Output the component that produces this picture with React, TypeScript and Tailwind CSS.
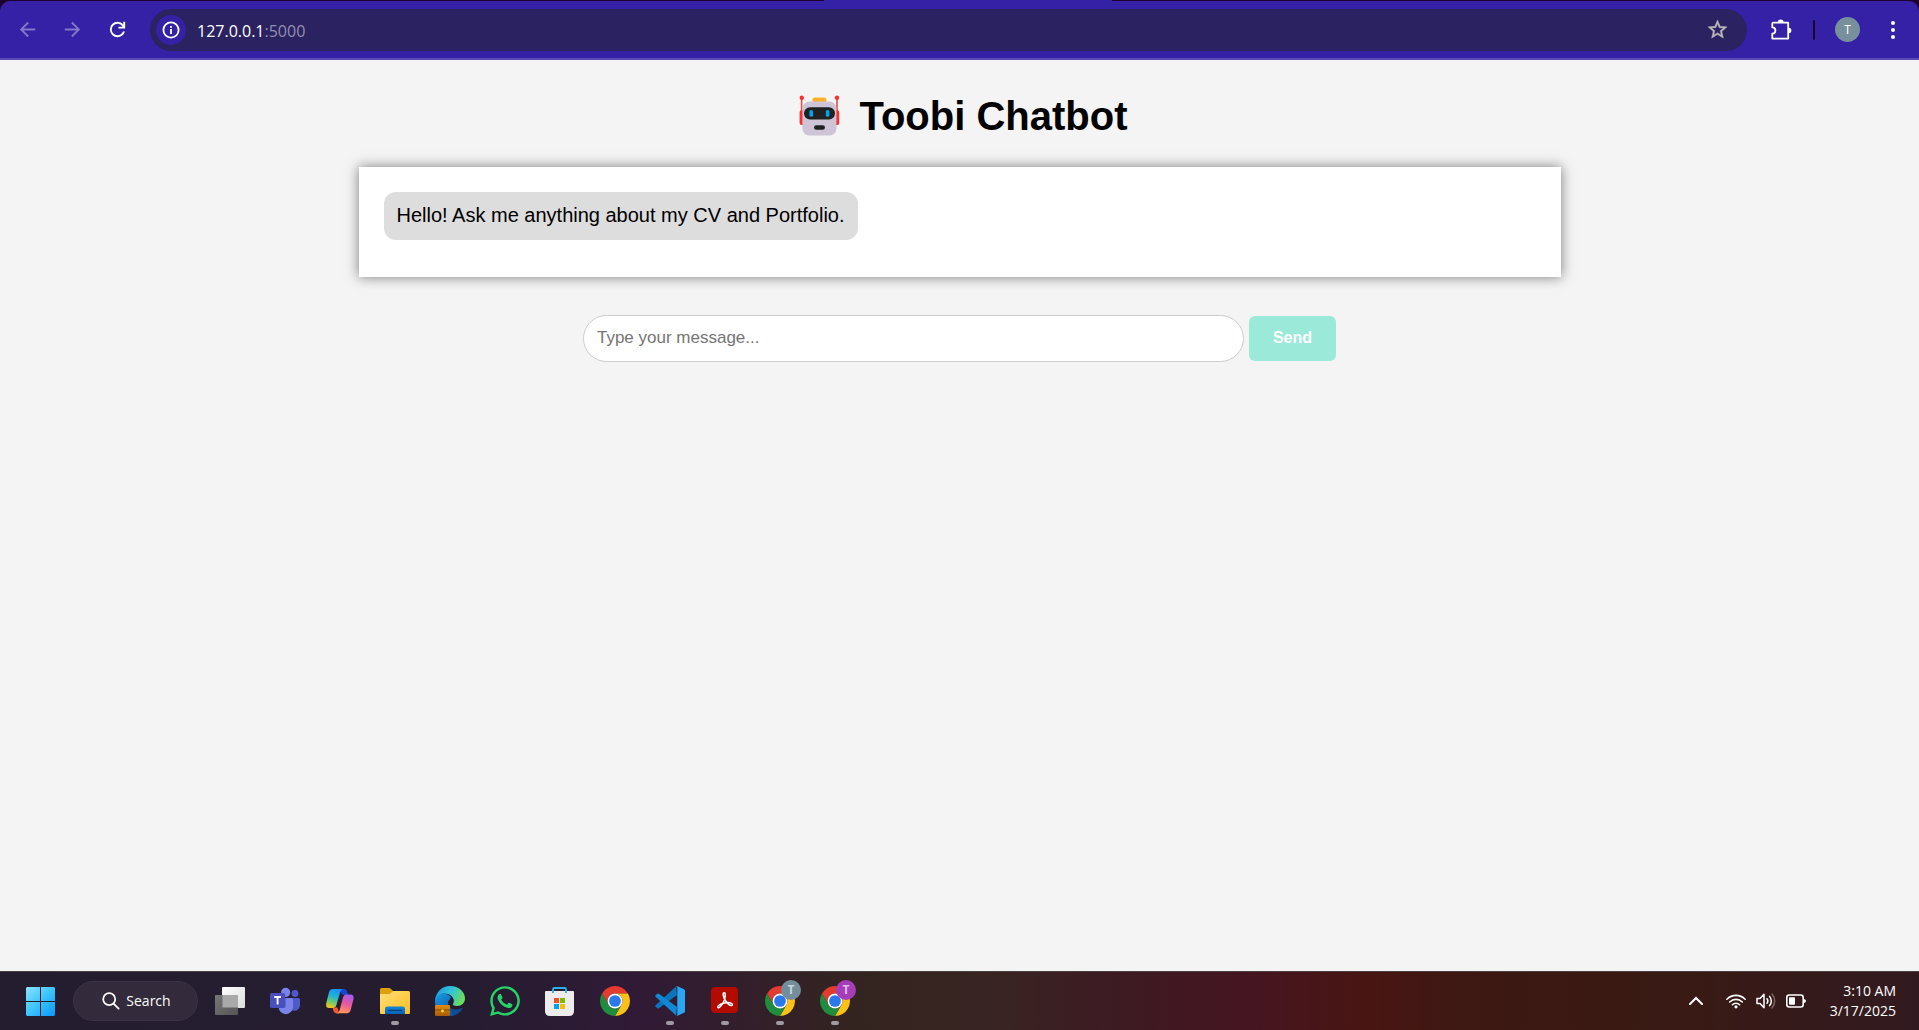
import type { ReactNode } from "react";
import { FaWhatsapp } from "react-icons/fa";

function BackIcon() {
  return (
    <svg viewBox="0 0 24 24" className="size-[23px] fill-current" aria-hidden="true">
      <path d="M20 11H7.83l5.59-5.59L12 4l-8 8 8 8 1.41-1.41L7.83 13H20v-2z" />
    </svg>
  );
}

function ReloadIcon() {
  return (
    <svg viewBox="0 0 24 24" className="size-[23px] fill-white" aria-hidden="true">
      <path d="M12 20q-3.35 0-5.675-2.325T4 12t2.325-5.675T12 4q1.725 0 3.3.713T18 6.75V4h2v7h-7V9h4.2q-.8-1.4-2.187-2.2T12 6Q9.5 6 7.75 7.75T6 12t1.75 4.25T12 18q1.925 0 3.475-1.1T17.65 14h2.1q-.7 2.65-2.85 4.325T12 20" />
    </svg>
  );
}

function InfoIcon() {
  return (
    <svg viewBox="0 0 18 18" className="size-[18px]" fill="none" stroke="#fff" strokeWidth="1.8" aria-hidden="true">
      <circle cx="9" cy="9" r="7.6" />
      <path d="M9 8v5M9 5v1.8" />
    </svg>
  );
}

function StarIcon() {
  return (
    <svg viewBox="0 0 24 24" className="size-[23px] fill-[#bdb9bb] stroke-[#bdb9bb]" strokeWidth=".4" aria-hidden="true">
      <path d="M22 9.24l-7.19-.62L12 2 9.19 8.63 2 9.24l5.46 4.73L5.82 21 12 17.27 18.18 21l-1.63-7.03L22 9.24zM12 15.4l-3.76 2.27 1-4.28-3.32-2.88 4.38-.38L12 6.1l1.71 4.04 4.38.38-3.32 2.88 1 4.28L12 15.4z" />
    </svg>
  );
}

function PuzzleIcon() {
  return (
    <svg viewBox="0 0 21 21" className="size-[21px]" aria-hidden="true">
      <path
        d="M2.4 3.7H17.2V19.6H1.3V14.6A3.1 3.1 0 0 0 1.3 8.4V4.7Q1.3 3.7 2.4 3.7Z"
        fill="none"
        stroke="#fff"
        strokeWidth="1.8"
        strokeLinejoin="round"
      />
      <path d="M6.9 3.2a2.8 2.8 0 0 1 5.6 0zM17.6 8.7a2.8 2.8 0 0 1 0 5.6z" fill="#fff" />
    </svg>
  );
}

function RobotIcon() {
  return (
    <svg viewBox="0 0 56 44" className="h-11 w-14" role="img" aria-label="Robot">
      <path d="M10.6 4v16M46 4v16" stroke="#f04a45" strokeWidth="1.6" />
      <circle cx="10.8" cy="3.8" r="2.2" fill="#f8312f" />
      <circle cx="46" cy="3.8" r="2.2" fill="#f8312f" />
      <rect x="8.6" y="16" width="6" height="15" rx="2.6" fill="#f8312f" />
      <rect x="42.2" y="16" width="6" height="15" rx="2.6" fill="#f8312f" />
      <rect x="21.4" y="3.4" width="14" height="5" rx="2.2" fill="#ffb02e" />
      <rect x="11.4" y="7.6" width="34" height="34" rx="7" fill="#cdc4d6" />
      <rect x="13" y="13.2" width="31" height="12.2" rx="6" fill="#212121" />
      <rect x="18.4" y="16" width="3.6" height="6.8" rx="1.6" fill="#00a6ed" />
      <rect x="34.8" y="16" width="3.6" height="6.8" rx="1.6" fill="#00a6ed" />
      <rect x="23" y="31.2" width="11" height="4.6" rx="2.3" fill="#212121" />
    </svg>
  );
}

function StartIcon() {
  return (
    <svg viewBox="0 0 29 29" className="size-[29px]" aria-hidden="true">
      <defs>
        <linearGradient id="start" x1="0" y1="0" x2="29" y2="29" gradientUnits="userSpaceOnUse">
          <stop offset="0" stopColor="#8ce3ff" />
          <stop offset=".5" stopColor="#3cc4fb" />
          <stop offset="1" stopColor="#0797fb" />
        </linearGradient>
      </defs>
      <path d="M1 0h13v14H0V1zM15 0h13l1 1v13H15zM0 15h14v14H1l-1-1zM15 15h14v13l-1 1H15z" fill="url(#start)" />
    </svg>
  );
}

function SearchIcon() {
  return (
    <svg viewBox="0 0 18 18" className="size-[18px]" fill="none" stroke="#fff" strokeWidth="1.8" strokeLinecap="round" aria-hidden="true">
      <circle cx="7.2" cy="7.2" r="6" />
      <path d="M11.6 11.6 16.6 16.6" />
    </svg>
  );
}

function TaskViewIcon() {
  return (
    <svg viewBox="0 0 30 30" className="size-[30px]" aria-hidden="true">
      <defs>
        <linearGradient id="tvFront" x1="0" y1="0" x2="1" y2="1">
          <stop offset="0" stopColor="#fff" />
          <stop offset="1" stopColor="#dcdcdc" />
        </linearGradient>
        <linearGradient id="tvBack" x1="0" y1="0" x2="1" y2="1">
          <stop offset="0" stopColor="#777" />
          <stop offset="1" stopColor="#555" />
        </linearGradient>
      </defs>
      <rect x="7" y="1" width="23" height="21" rx="1" fill="url(#tvFront)" />
      <rect x="0" y="9" width="23" height="20" rx="1" fill="url(#tvBack)" />
      <rect x="7.5" y="9" width="15.5" height="12.5" fill="#a9a9a9" />
    </svg>
  );
}

function TeamsIcon() {
  return (
    <svg viewBox="0 0 30 30" className="size-[30px]" aria-hidden="true">
      <circle cx="25" cy="7.5" r="3.4" fill="#5059c9" />
      <path d="M19 12h9.5q1.5 0 1.5 1.5V19a5.5 5.5 0 0 1-9 4.5z" fill="#5059c9" />
      <circle cx="15.6" cy="6.4" r="4.6" fill="#7b83eb" />
      <path d="M9 12h12.3q1.7 0 1.7 1.7V21a7.2 7.2 0 0 1-14.4 0z" fill="#7b83eb" />
      <path d="M9 12h7v8a2 2 0 0 1-2 2H9z" fill="#4a52b8" opacity=".5" />
      <rect x="0" y="7" width="15" height="15" rx="1.5" fill="#4750bd" />
      <path d="M4.2 11h6.8M7.6 11v7.6" stroke="#fff" strokeWidth="1.9" />
    </svg>
  );
}

function CopilotIcon() {
  return (
    <svg viewBox="0 0 30 30" className="size-[30px]" aria-hidden="true">
      <defs>
        <linearGradient id="cpLeft" x1=".6" y1="0" x2=".3" y2="1">
          <stop offset="0" stopColor="#1692f5" />
          <stop offset=".4" stopColor="#23b3d6" />
          <stop offset=".7" stopColor="#6fc96a" />
          <stop offset="1" stopColor="#f3c51d" />
        </linearGradient>
        <linearGradient id="cpRight" x1=".7" y1="0" x2=".4" y2="1">
          <stop offset="0" stopColor="#a55bf0" />
          <stop offset=".5" stopColor="#e9579c" />
          <stop offset="1" stopColor="#ff9a5c" />
        </linearGradient>
      </defs>
      <path d="M14 3h5q2.300 0 3 2.200l1.200 3.800H19q-2 0-2.800-2z" fill="#1a45d6" />
      <path d="M7.500 21.500h5l1.600 5.900h-2.600q-2.300 0-3-2.300z" fill="#f4562f" />
      <path d="M8.200 3H18q-2 .3-2.800 3L11.400 19q-.8 3-3.800 3H4.200Q.2 22 1.200 17.300L4 6.200Q4.900 3 8.200 3z" fill="url(#cpLeft)" />
      <path d="M21.400 8.600h4q4 0 3.100 4.600l-2.900 11Q24.700 27.300 21.500 27.300H11.800q2-.3 2.800-3L18 11.500q.8-2.900 3.400-2.900z" fill="url(#cpRight)" />
    </svg>
  );
}

function ExplorerIcon() {
  return (
    <svg viewBox="0 0 30 30" className="size-[30px]" aria-hidden="true">
      <defs>
        <linearGradient id="folder" x1="0" y1="0" x2="1" y2="1">
          <stop offset="0" stopColor="#ffdf79" />
          <stop offset="1" stopColor="#fdbe1f" />
        </linearGradient>
        <linearGradient id="drawer" x1="0" y1="0" x2="0" y2="1">
          <stop offset="0" stopColor="#1287d8" />
          <stop offset="1" stopColor="#0a62b4" />
        </linearGradient>
      </defs>
      <path d="M0 3.500Q0 2 1.500 2H9q1 0 2 1l2 2h15v6H0z" fill="#dfa00d" />
      <path d="M0 8h9q1 0 2-1l2-2h15.500Q30 5 30 6.500V27q0 1-1 1H1q-1 0-1-1z" fill="url(#folder)" />
      <path d="M5 28v-5q0-2.500 2.500-2.500h15Q25 20.500 25 23v5z" fill="url(#drawer)" />
      <path d="M8.500 24.300h13" stroke="#07407c" strokeWidth="1.300" strokeLinecap="round" />
    </svg>
  );
}

function EdgeIcon() {
  return (
    <svg viewBox="0 0 30 30" className="size-[30px]" aria-hidden="true">
      <defs>
        <linearGradient id="edgeTop" x1="0" y1=".3" x2="1" y2=".6">
          <stop offset="0" stopColor="#1e9ddf" />
          <stop offset=".5" stopColor="#33c3d8" />
          <stop offset="1" stopColor="#6fe150" />
        </linearGradient>
        <linearGradient id="edgeSide" x1="0" y1="0" x2=".6" y2="1">
          <stop offset="0" stopColor="#1a9fe8" />
          <stop offset="1" stopColor="#0b54a8" />
        </linearGradient>
        <linearGradient id="edgeCase" x1="0" y1="0" x2="0" y2="1">
          <stop offset="0" stopColor="#e08c12" />
          <stop offset="1" stopColor="#a85c05" />
        </linearGradient>
      </defs>
      <path d="M13.500 13.500C12 17 14 23 20 23.500c3 .3 5.500-1 8-2C25.500 27 20.500 30 15 30 6.500 30 0 23.500 0 15z" fill="#0e4b93" />
      <path d="M0 15.500C0 9 5 7 9 7.500c4 .4 7.500 3 7.500 6-4-1-5 6-1 10l3 6.300Q16 30 15 30C6.500 30 0 24 0 15.500z" fill="url(#edgeSide)" />
      <path d="M0 14.500C.8 6 7 0 15 0c9 0 15 6 15 12.500 0 4.500-3.500 7.500-7.800 7.500-3 0-4.500-1-4.500-2 0-.9 1-1.500 1-3.500 0-3.500-4-7-9.200-7C5 7.500 1.500 10 0 14.500z" fill="url(#edgeTop)" />
      <path d="M18.300 17.200q-.8.700-.6 1.200-3.200-.9-3.200-3.600 0-2.200 1.700-3.600 2.500 1.500 2.500 3.600 0 1.400-.4 2.400z" fill="#241c31" />
      <rect x="0" y="19" width="15" height="11" rx="1" fill="url(#edgeCase)" />
      <path d="M0 24h15" stroke="#8a4a04" strokeWidth="1" />
      <circle cx="7.500" cy="25" r="1.400" fill="#ffd84a" />
    </svg>
  );
}

function StoreIcon() {
  return (
    <svg viewBox="0 0 30 30" className="size-[30px]" aria-hidden="true">
      <path d="M8 8V3.500Q8 2 9.500 2h10Q21 2 21 3.500V8" fill="none" stroke="#29b2ee" strokeWidth="1.900" />
      <path d="M0 6q0-1 1-1h27q1 0 1 1v19q0 5-5 5H5q-5 0-5-5z" fill="#ececec" />
      <path d="M8 5v2M21 5v2" stroke="#29b2ee" strokeWidth="1.900" />
      <path d="M9 12h5v5H9z" fill="#f25022" />
      <path d="M15 12h5v5h-5z" fill="#7fba00" />
      <path d="M9 18h5v5H9z" fill="#00a4ef" />
      <path d="M15 18h5v5h-5z" fill="#ffb900" />
    </svg>
  );
}

function ChromeIcon() {
  return (
    <svg viewBox="-22 -22 44 44" className="size-[30px]" aria-hidden="true">
      <path d="M-19.050-11A22 22 0 0 1 19.050-11L0-11A11 11 0 0 0-9.530 5.500Z" fill="#e33b2e" />
      <path d="M19.050-11A22 22 0 0 1 0 22L9.530 5.500A11 11 0 0 0 0-11Z" fill="#fbc116" />
      <path d="M0 22A22 22 0 0 1-19.050-11L-9.530 5.500A11 11 0 0 0 9.530 5.500Z" fill="#1e8e3e" />
      <circle r="11" fill="#fff" />
      <circle r="8.600" fill="#2a78ec" />
    </svg>
  );
}

function CodeIcon() {
  return (
    <svg viewBox="0 0 30 30" className="size-[30px]" aria-hidden="true">
      <path d="M.6 19.200 21 .6 22 9 4 22.300q-.8.600-1.600 0L.6 20.800q-.8-.8 0-1.600z" fill="#0b74bd" />
      <path d="M.6 10.800 21 29.400l1-8.400L4 7.700q-.8-.6-1.600 0L.6 9.200q-.8.800 0 1.600z" fill="#1288d4" />
      <path d="M21 .4q.7-.5 1.500-.2L29 3.300q1 .5 1 1.500v20.400q0 1-1 1.500l-6.500 3.100q-.8.300-1.500-.2 1.300.4 1.300-1.300V1.700Q22.300.2 21 .4z" fill="#29a7f2" />
    </svg>
  );
}

function AcrobatIcon() {
  return (
    <svg viewBox="0 0 30 30" className="size-[30px]" aria-hidden="true">
      <rect x="1" y="1" width="27" height="26" rx="4" fill="#b30b00" />
      <path
        d="M14.300 6.800c-2-.3-1.200 4.200 1 7.700 1.800 3 4.800 5.500 6.500 4.800 1.900-.9-.8-3.200-6-2.600-4.800.6-8.600 3-8 4.600.7 1.600 3.800-1.200 5.800-5.600 1.700-3.800 2.400-8.700.7-8.900z"
        fill="none"
        stroke="#fff"
        strokeWidth="1.500"
        strokeLinejoin="round"
      />
    </svg>
  );
}

function ChevronIcon() {
  return (
    <svg viewBox="0 0 16 10" className="h-2.5 w-4" fill="none" stroke="#fff" strokeWidth="2" strokeLinecap="round" aria-hidden="true">
      <path d="M2 8l6-6 6 6" />
    </svg>
  );
}

function WifiIcon() {
  return (
    <svg viewBox="0 0 20 16" className="h-4 w-5" fill="none" stroke="#fff" strokeWidth="1.600" strokeLinecap="round" aria-hidden="true">
      <path d="M.9 6.200a12.800 12.800 0 0 1 18.200 0M3.700 9a8.900 8.900 0 0 1 12.600 0M6.400 11.700a5.100 5.100 0 0 1 7.200 0" />
      <circle cx="10" cy="13.800" r="1.600" fill="#fff" stroke="none" />
    </svg>
  );
}

function VolumeIcon() {
  return (
    <svg viewBox="0 0 20 18" className="h-[18px] w-5" fill="none" stroke="#fff" strokeWidth="1.500" strokeLinecap="round" strokeLinejoin="round" aria-hidden="true">
      <path d="M1 6.500h3L8 2.300v13.400L4 11.500H1z" />
      <path d="M11 6.800a3.500 3.500 0 0 1 0 4.400M13.600 4.400a7 7 0 0 1 0 9.200" />
      <path d="M16 2a10.500 10.500 0 0 1 0 14" stroke="#7b6461" />
    </svg>
  );
}

function BatteryIcon() {
  return (
    <svg viewBox="0 0 20 14" className="h-3.5 w-5" aria-hidden="true">
      <rect x=".8" y="1" width="16.400" height="12" rx="2.500" fill="none" stroke="#fff" strokeWidth="1.600" />
      <rect x="3" y="3.300" width="6" height="7.400" rx=".8" fill="#fff" />
      <path d="M18 5q2 .4 2 2t-2 2z" fill="#fff" />
    </svg>
  );
}

function ProfileBadge({ purple = false }: { purple?: boolean }) {
  return (
    <span
      aria-hidden="true"
      className={`absolute -top-1.5 left-[29px] flex size-5 items-center justify-center rounded-full text-xs leading-none font-bold ${
        purple ? "bg-[#a63db8] text-[#e3b9ea]" : "bg-[#738d9a] text-[#c8d6dc]"
      }`}
    >
      T
    </span>
  );
}

type TaskbarApp = { name: string; icon: ReactNode; running?: boolean; badge?: ReactNode };

const apps: TaskbarApp[] = [
  { name: "Task view", icon: <TaskViewIcon /> },
  { name: "Teams", icon: <TeamsIcon /> },
  { name: "Copilot", icon: <CopilotIcon /> },
  { name: "File Explorer", icon: <ExplorerIcon />, running: true },
  { name: "Edge", icon: <EdgeIcon /> },
  { name: "WhatsApp", icon: <FaWhatsapp className="size-[34px] shrink-0 text-[#25d366]" aria-hidden="true" /> },
  { name: "Microsoft Store", icon: <StoreIcon /> },
  { name: "Chrome", icon: <ChromeIcon /> },
  { name: "Visual Studio Code", icon: <CodeIcon />, running: true },
  { name: "Acrobat", icon: <AcrobatIcon />, running: true },
  { name: "Chrome, work profile", icon: <ChromeIcon />, running: true, badge: <ProfileBadge /> },
  { name: "Chrome, personal profile", icon: <ChromeIcon />, running: true, badge: <ProfileBadge purple /> },
];

function BrowserBar() {
  return (
    <header className="relative bg-[#1c0030] pt-px font-['Open_Sans',sans-serif]">
      <div className="absolute inset-x-0 top-0 mx-auto h-px w-[288px] translate-x-2 bg-[#3421a6]" />
      <div className="flex h-[59px] items-center rounded-t-[10px] border-b-2 border-[#5c49b8] bg-[#3421a6] pr-3.5 pl-4">
        <button type="button" aria-label="Back" className="text-[#8277c9]">
          <BackIcon />
        </button>
        <button type="button" aria-label="Forward" className="ml-[22px] rotate-180 text-[#8277c9]">
          <BackIcon />
        </button>
        <button type="button" aria-label="Reload" className="ml-[22px]">
          <ReloadIcon />
        </button>
        <div className="ml-[21px] flex h-[42px] flex-1 items-center rounded-full bg-[#2b2262] pr-[18px] pl-1.5">
          <button type="button" aria-label="Site information" className="flex size-[30px] items-center justify-center rounded-full bg-[#3421a6]">
            <InfoIcon />
          </button>
          <p className="ml-[11px] flex-1 pt-0.5 text-base text-[#958fae]">
            <span className="text-white">127.0.0.1</span>:5000
          </p>
          <button type="button" aria-label="Bookmark this page">
            <StarIcon />
          </button>
        </div>
        <button type="button" aria-label="Extensions" className="ml-6">
          <PuzzleIcon />
        </button>
        <span className="ml-[21px] h-5 w-0.5 rounded-full bg-[#1c0030]" />
        <button type="button" aria-label="Profile" className="ml-5 flex size-[25px] items-center justify-center rounded-full bg-[#78909c] text-xs text-white">
          T
        </button>
        <button type="button" aria-label="Menu" className="ml-5 flex w-[25px] flex-col items-center gap-[3px]">
          <span className="size-1 rounded-full bg-white" />
          <span className="size-1 rounded-full bg-white" />
          <span className="size-1 rounded-full bg-white" />
        </button>
      </div>
    </header>
  );
}

function Taskbar() {
  return (
    <footer className="flex h-[59px] items-center border-t border-[#47413f] bg-[linear-gradient(to_right,#241d2f_0%,#251c30_24%,#301a36_33%,#34241f_45%,#382523_51%,#3d1b22_58%,#451521_65%,#491513_71%,#3e1812_76%,#391a14_88%,#351a1b_94%,#311a1f_100%)] pr-[23px] pl-[26px] font-['Open_Sans',sans-serif] text-sm text-white">
      <button type="button" aria-label="Start">
        <StartIcon />
      </button>
      <button type="button" className="ml-[18px] flex h-10 w-[125px] items-center justify-center gap-1.5 rounded-full border border-[#3a3341] bg-[#332b3b] pl-0.5">
        <SearchIcon />
        Search
      </button>
      <nav aria-label="Apps" className="ml-1 flex flex-1">
        {apps.map((app) => (
          <button key={app.name} type="button" aria-label={app.name} className="relative flex h-[30px] w-[55px] items-center justify-center">
            {app.icon}
            {app.badge}
            {app.running && <span className="absolute top-[35px] h-1 w-2 rounded-full bg-[#a09aa3]" />}
          </button>
        ))}
      </nav>
      <button type="button" aria-label="Show hidden icons" className="mr-[22px]">
        <ChevronIcon />
      </button>
      <button type="button" aria-label="Network, volume and battery" className="flex items-center gap-2.5">
        <WifiIcon />
        <VolumeIcon />
        <BatteryIcon />
      </button>
      <button type="button" className="ml-6 text-right leading-5">
        <time className="block">3:10 AM</time>
        <time className="block">3/17/2025</time>
      </button>
    </footer>
  );
}

export default function App() {
  return (
    <div className="flex min-h-screen flex-col bg-[#f4f4f4] font-['Liberation_Sans',Arial,sans-serif] text-black">
      <BrowserBar />
      <main className="flex-1">
        <h1 className="mt-8 mb-[27px] flex items-center justify-center gap-3 text-[40px] leading-[48px] font-bold">
          <RobotIcon />
          Toobi Chatbot
        </h1>
        <section aria-label="Conversation" className="mx-auto h-[110px] w-full max-w-[1202px] bg-white p-[25px] shadow-[0_0_12px_rgba(0,0,0,0.5)]">
          <p className="h-12 w-fit rounded-xl bg-[#ddd] px-[13px] text-xl leading-[46px]">Hello! Ask me anything about my CV and Portfolio.</p>
        </section>
        <form className="mt-[38px] flex items-center justify-center gap-[5px]" onSubmit={(e) => e.preventDefault()}>
          <input
            type="text"
            aria-label="Message"
            placeholder="Type your message..."
            className="h-[47px] w-full max-w-[661px] rounded-full border border-[#ccc] bg-white px-[13px] pb-0.5 text-[17px] placeholder:text-[#757575]"
          />
          <button type="submit" className="h-[45px] rounded-md bg-[#9be9d8] px-6 pb-0.5 text-base font-bold text-white">
            Send
          </button>
        </form>
      </main>
      <Taskbar />
    </div>
  );
}
